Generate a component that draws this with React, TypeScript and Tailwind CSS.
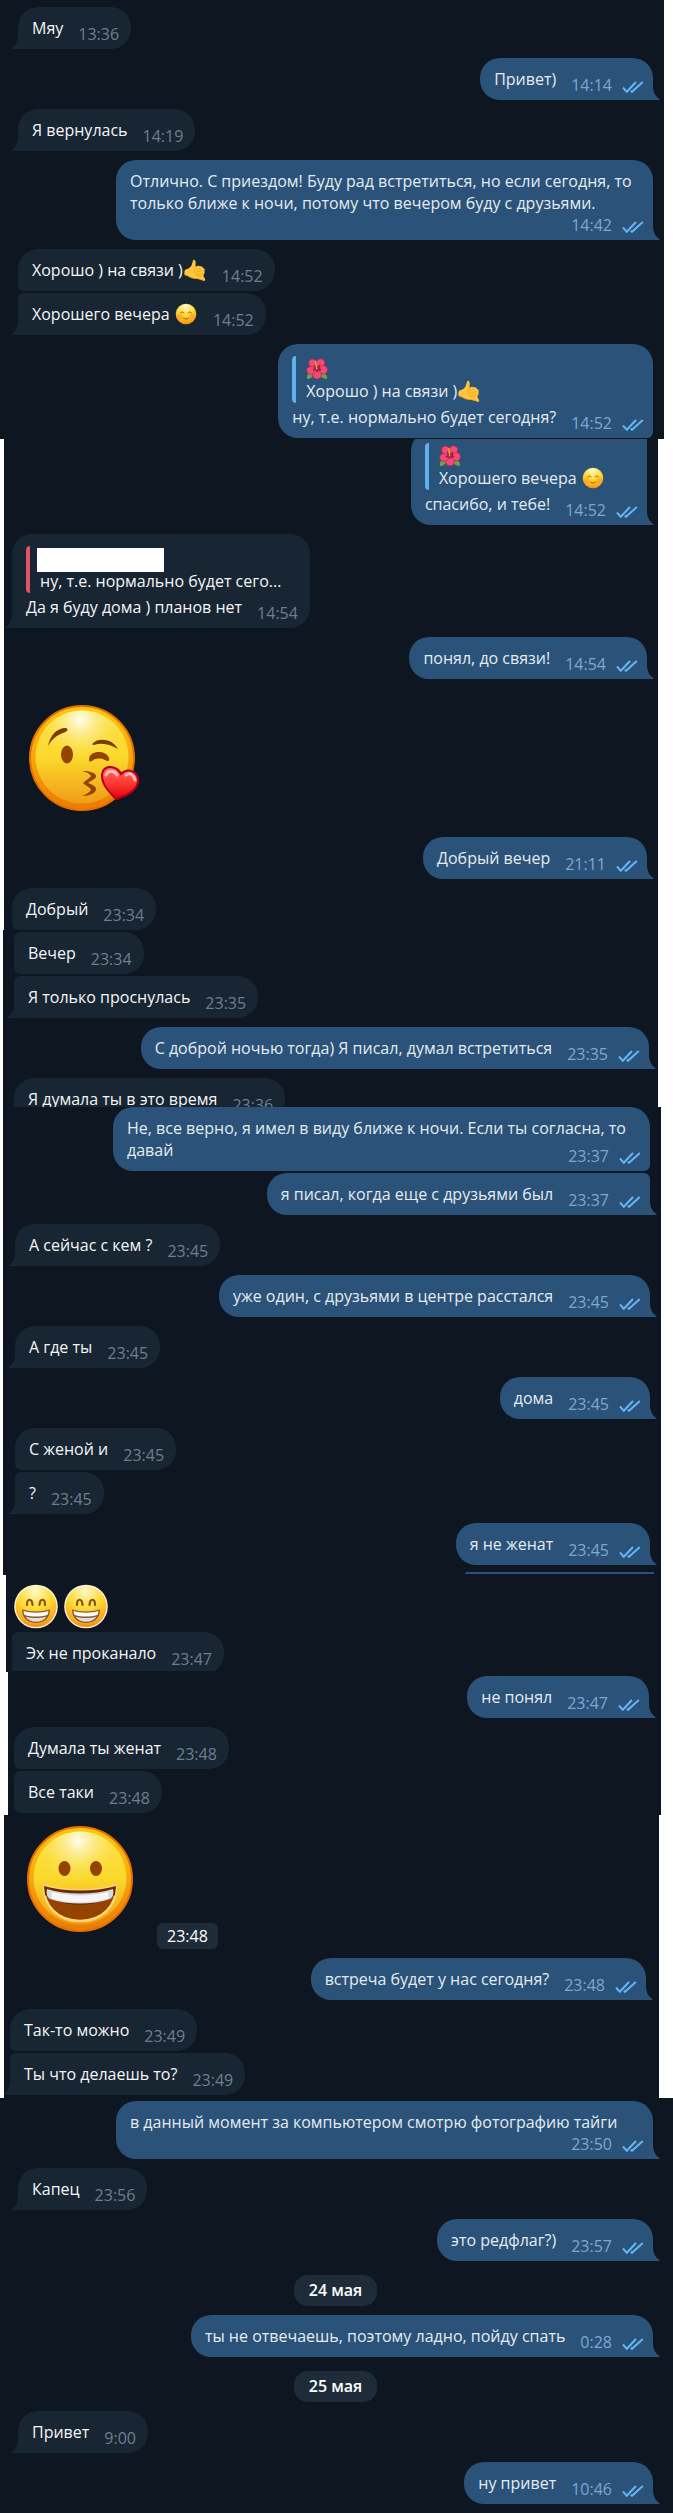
import type { ReactNode } from "react";
import clsx from "clsx";

type BubbleProps = {
  out?: boolean;
  time: string;
  children: ReactNode;
  quote?: ReactNode;
  joinTop?: boolean;
  joinBottom?: boolean;
  timeBelow?: boolean;
};

function Ticks() {
  return (
    <svg width="22" height="12" viewBox="0 0 22 12" fill="none" stroke="#64b5f6" strokeWidth="2" className="inline-block ml-2.5" aria-label="Прочитано">
      <path d="M1 6.5 L4.8 10.800 L14 1" />
      <path d="M8.800 9.600 L10 10.800 L20.800 1" />
    </svg>
  );
}

function Tail({ out }: { out?: boolean }) {
  return (
    <svg
      width="8"
      height="13"
      viewBox="0 0 8 13"
      className={clsx("absolute bottom-0", out ? "left-full -ml-px text-[#2b5278]" : "right-full -mr-px text-[#182533] -scale-x-100")}
      aria-hidden="true"
    >
      <path d="M0 0 H1 C1.2 5.5 3.5 9.5 7.6 12.2 Q8 13 7 13 H0 Z" fill="currentColor" />
    </svg>
  );
}

function Bubble({ out, time, children, quote, joinTop, joinBottom, timeBelow }: BubbleProps) {
  return (
    <div className={clsx("flex", out && "justify-end", joinTop ? "mt-0.5" : "mt-[9px]")}>
      <div
        className={clsx(
          "relative flow-root max-w-[537px] pl-3.5 pt-2.5 pb-1 rounded-[20px]",
          out ? "bg-[#2b5278] text-[#e4ecf2] pr-[9px]" : "bg-[#182533] text-[#f5f5f5] pr-3",
          joinTop && (out ? "rounded-tr-md" : "rounded-tl-md"),
          joinBottom && (out ? "rounded-br-md" : "rounded-bl-md"),
          !joinBottom && (out ? "rounded-br-none" : "rounded-bl-none")
        )}
      >
        {quote}
        {children}
        <span
          className={clsx(
            "float-right ml-[15px] whitespace-nowrap",
            !timeBelow && "mt-1.5",
            out ? "text-[#7da8d3]" : "text-[#6d7f8f]"
          )}
        >
          {time}
          {out && <Ticks />}
        </span>
        {!joinBottom && <Tail out={out} />}
      </div>
    </div>
  );
}

function Quote({ name, text, red }: { name: ReactNode; text: ReactNode; red?: boolean }) {
  return (
    <blockquote className="flex mt-0.5 mb-[3px]">
      <div className={clsx("w-1 rounded-l-sm", red ? "bg-[#e05561]" : "bg-[#5eb0ef]")} />
      <div className="pl-2.5 pt-0.5 pb-px">
        <div className="h-[22px]">{name}</div>
        <div>{text}</div>
      </div>
    </blockquote>
  );
}

function CallMe() {
  return (
    <svg viewBox="0 0 22 22" className="inline-block align-top size-[22px] mx-px" role="img" aria-label="🤙">
      <path
        d="M9.2 1 C10.8 .3 11.8 2 11.6 3.8 L11.6 8 C13.5 6.2 15 6.5 15.8 7.3 C17.5 6.8 18.8 7.5 19 9 C20.8 9.3 21 11 20.5 12.3 C21 14 20 15.5 19.2 16.6 L21 20 C21.8 21.6 20.5 22 19 21.5 L13.5 19.8 C9 20 6.2 18.5 3.8 16.8 L.5 16 C0 13.5 .6 11.5 1.5 10.6 L4 9.7 C6 8.5 7.6 7.4 8 5 Z"
        fill="#ffc63d"
      />
      <path d="M11.6 8 L10.2 12 M12.2 10.5 L15.8 9.5 M12.5 13 L18.5 11.5 M13 15.5 L19 14.3 M10.5 12 C10.5 15.5 12.5 17 16.5 17.3" fill="none" stroke="#eda620" strokeWidth=".8" strokeLinecap="round" />
      <path d="M1 15.5 C6 18.5 9 19.8 14 19.6 L20.5 21.5" fill="none" stroke="#f0a31c" strokeWidth=".8" />
    </svg>
  );
}

function Blush() {
  return (
    <svg viewBox="0 0 22 22" className="inline-block align-top size-[22px] mx-px" role="img" aria-label="☺️">
      <circle cx="11" cy="11" r="10.3" fill="url(#face)" />
      <circle cx="5" cy="13.2" r="2.8" fill="#fb8a2c" opacity=".35" />
      <circle cx="17" cy="13.2" r="2.8" fill="#fb8a2c" opacity=".35" />
      <path d="M5.500 9.8 Q7.300 7.6 9 9.8 M13 9.8 Q14.700 7.6 16.500 9.8 M8.5 15.2 Q11 17.4 13.5 15.2" fill="none" stroke="#a9651a" strokeWidth="1" strokeLinecap="round" />
    </svg>
  );
}

function Hibiscus() {
  return (
    <svg viewBox="0 0 22 22" className="block size-[22px]" role="img" aria-label="🌺">
      <path d="M1 21 Q.5 16 4 13.5 L7 17.5 Q5 21 1 21 Z M21 21 Q21.5 16.5 17.5 15 L14 18 Q17 21.4 21 21 Z" fill="#6fa344" />
      <g fill="#f04a75" stroke="#c01f4e" strokeWidth=".6">
        <ellipse cx="6.8" cy="5.4" rx="4" ry="4.5" transform="rotate(-35 6.8 5.4)" />
        <ellipse cx="14.4" cy="5" rx="4.5" ry="4.1" transform="rotate(-30 14.4 5)" />
        <ellipse cx="17.4" cy="11.8" rx="4.1" ry="4.3" />
        <ellipse cx="11" cy="16.6" rx="4.4" ry="4.3" />
        <ellipse cx="5" cy="12.4" rx="4.3" ry="4" />
      </g>
      <path d="M11 10 L8 7 M11 10 L14 7 M11 10 L15 12 M11 10 L11 14 M11 10 L7 12" stroke="#a3173f" strokeWidth="1.4" />
      <path d="M10.8 10.8 L9.6 3.6" stroke="#f5a623" strokeWidth="1.6" strokeLinecap="round" strokeDasharray="1 1.4" />
    </svg>
  );
}

// shared gradients for all the faces
function Gradients() {
  return (
    <svg width="0" height="0" className="absolute" aria-hidden="true">
      <defs>
        <radialGradient id="face" cx=".48" cy=".12" r=".95">
          <stop offset="0" stopColor="#fff9c9" />
          <stop offset=".45" stopColor="#fddb35" />
          <stop offset=".8" stopColor="#f9a91c" />
          <stop offset="1" stopColor="#ee7b08" />
        </radialGradient>
        <linearGradient id="rim" x1="0" y1="0" x2="0" y2="1">
          <stop offset="0" stopColor="#fbc90d" />
          <stop offset=".5" stopColor="#f8a50e" />
          <stop offset="1" stopColor="#ec7a00" />
        </linearGradient>
        <linearGradient id="skin" x1="0" y1="0" x2="0" y2="1">
          <stop offset="0" stopColor="#fbe04a" />
          <stop offset=".5" stopColor="#fbd92c" />
          <stop offset="1" stopColor="#f19c18" />
        </linearGradient>
        <radialGradient id="shine" cx=".48" cy=".1" r=".45">
          <stop offset="0" stopColor="#fffef0" />
          <stop offset="1" stopColor="#fbe04a" stopOpacity="0" />
        </radialGradient>
        <linearGradient id="heart" x1="0" y1="0" x2="0" y2="1">
          <stop offset="0" stopColor="#ff6b6b" />
          <stop offset=".5" stopColor="#ff3b30" />
          <stop offset="1" stopColor="#e00010" />
        </linearGradient>
      </defs>
    </svg>
  );
}

function BigFace({ children, label }: { children: ReactNode; label: string }) {
  return (
    <svg viewBox="0 0 110 106" className="block w-[110px] h-[106px]" role="img" aria-label={label}>
      <circle cx="53" cy="53" r="52" fill="url(#rim)" stroke="#e76f00" strokeWidth="2" />
      <circle cx="53" cy="52" r="46.5" fill="url(#skin)" />
      <circle cx="53" cy="52" r="46.5" fill="url(#shine)" />
      {children}
    </svg>
  );
}

function Kiss() {
  return (
    <BigFace label="😘">
      <path d="M19 41 C21 31 27 23 37 23 C40 24 38 27 35 27.5 C28 30 23 34 19 41 Z" fill="#7b3b06" />
      <path d="M64 38 C70 32 84 34 89 44 C82 40 74 37 65 40 C63 40 63 39 64 38 Z" fill="#7b3b06" />
      <ellipse cx="38" cy="49.500" rx="6" ry="9" fill="#944400" />
      <path d="M60 54 C61 45 77 45 80 53 C81 56 79 57 76 55 C71 53 67 53 63 56 C60 57 60 56 60 54 Z" fill="#944400" />
      <path d="M53 66 C61 66 67 68 67 71 C67 74 63 75 59 78 C65 80 67 82 67 84 C67 88 61 91 53 91 C58 89 61 87 62 85 C61 82 57 81 54 78 C57 75 61 73 62 71 C60 68 57 67 53 66 Z" fill="#944400" />
      <path d="M87 94 C78 85 70 76 74 66 C78 59 89 62 92 69 C99 62 110 67 109 77 C107 87 96 91 87 94 Z" fill="url(#heart)" stroke="#b4001a" strokeWidth="2" />
      <path d="M77 70 C79 65 85 65 88 70 M97 70 C101 67 105 70 106 75" fill="none" stroke="#fff" strokeOpacity=".6" strokeWidth="3" strokeLinecap="round" />
    </BigFace>
  );
}

function Grin() {
  return (
    <BigFace label="😀">
      <ellipse cx="37.500" cy="42.500" rx="6" ry="7.500" fill="#944400" />
      <ellipse cx="69" cy="42.500" rx="6" ry="7.500" fill="#944400" />
      <path d="M17 60 C38 66 68 66 89 60 C90 80 75 95 53 95 C31 95 16 80 17 60 Z" fill="#944400" stroke="#fcd676" strokeWidth="2.500" />
      <path d="M17 60 C38 66 68 66 89 60 L88 69 C68 82 38 82 18 69 Z" fill="#6b2b02" />
      <path d="M20 63 C39 69 67 69 86 63 C87 68 86 71 83 73 C66 79 40 79 23 73 C20 71 19 68 20 63 Z" fill="#d5d9dc" />
      <path d="M25 66 C42 70.500 64 70.500 81 66 C83 72 81 73 78 73.500 C62 77.500 44 77.500 28 73.500 C25 73 23 72 25 66 Z" fill="#f5f5f5" />
    </BigFace>
  );
}

function Beaming() {
  return (
    <svg viewBox="0 0 44 45" className="block w-11 h-[45px]" role="img" aria-label="😁">
      <circle cx="22" cy="22.500" r="21.800" fill="#fdf3e6" />
      <circle cx="22" cy="22.500" r="20.500" fill="url(#face)" />
      <path d="M13 21 C13 14 18 14 18.500 21 M25.500 21 C26 14 31 14 31 21" fill="none" stroke="#8a5108" strokeWidth="2.200" strokeLinecap="round" />
      <path d="M8 25.500 C17 28 27 28 36 25.500 C36 34 30 39 22 39 C14 39 8 34 8 25.500 Z" fill="#8c5a28" />
      <path d="M9.500 27 C17 29.300 27 29.300 34.500 27 C34.300 28.800 34 30 33.300 31 C26 33 18 33 10.700 31 C10 30 9.700 28.800 9.500 27 Z" fill="#fafafa" />
      <path d="M11.500 32.700 C18 34.500 26 34.500 32.500 32.700 C30 36 26.500 37.800 22 37.800 C17.500 37.800 14 36 11.500 32.700 Z" fill="#dedede" />
    </svg>
  );
}

function DatePill({ children }: { children: ReactNode }) {
  return (
    <div className="flex justify-center mt-3.5">
      <div className="px-[15px] rounded-[14px] bg-[#1e2c3a] text-white font-semibold leading-[31px]">{children}</div>
    </div>
  );
}

export default function App() {
  return (
    <main className="min-h-screen bg-white font-['Open_Sans',sans-serif] text-[16px] leading-[22px] [&>section]:overflow-hidden [&>section]:bg-[#0e1621]">
      <Gradients />

      <section className="mr-[9px] pl-[18px] pr-[11px] pb-px">
        <div className="-mt-0.5">
          <Bubble time="13:36">Мяу</Bubble>
        </div>
        <Bubble out time="14:14">Привет)</Bubble>
        <Bubble time="14:19">Я вернулась</Bubble>
        <Bubble out timeBelow time="14:42">
          Отлично. С приездом! Буду рад встретиться, но если сегодня, то только ближе к ночи, потому что вечером буду с друзьями.
        </Bubble>
        <Bubble joinBottom time="14:52">
          Хорошо ) на связи )<CallMe />
        </Bubble>
        <Bubble joinTop time="14:52">
          Хорошего вечера <Blush />
        </Bubble>
        <Bubble out joinBottom time="14:52" quote={<Quote name={<Hibiscus />} text={<>Хорошо ) на связи )<CallMe /></>} />}>
          ну, т.е. нормально будет сегодня?
        </Bubble>
      </section>

      <section className="ml-1 mr-[15px] pl-2 pr-[11px]">
        <div className="-mt-2.5">
          <Bubble out joinTop time="14:52" quote={<Quote name={<Hibiscus />} text={<>Хорошего вечера <Blush /></>} />}>
            спасибо, и тебе!
          </Bubble>
        </div>
        <Bubble
          time="14:54"
          quote={<Quote red name={<div className="w-[127px] h-6 -ml-[3px] bg-white" />} text="ну, т.е. нормально будет сего..." />}
        >
          Да я буду дома ) планов нет
        </Bubble>
        <Bubble out time="14:54">понял, до связи!</Bubble>
        <div className="mt-[9px] py-[17px] pl-[17px]">
          <Kiss />
        </div>
        <Bubble out time="21:11">Добрый вечер</Bubble>
        <Bubble joinBottom time="23:34">Добрый</Bubble>
      </section>

      <section className="ml-[3px] mr-[15px] pl-[11px] pr-[9px]">
        <Bubble joinTop joinBottom time="23:34">Вечер</Bubble>
        <Bubble joinTop time="23:35">Я только проснулась</Bubble>
        <Bubble out time="23:35">С доброй ночью тогда) Я писал, думал встретиться</Bubble>
        <div className="h-[38px] overflow-hidden">
          <Bubble joinBottom time="23:36">Я думала ты в это время</Bubble>
        </div>
      </section>

      <section className="ml-[3px] mr-3 pl-3 pr-[11px]">
        <div className="-mt-[9px]">
          <Bubble out joinBottom time="23:37">
            Не, все верно, я имел в виду ближе к ночи. Если ты согласна, то давай
          </Bubble>
        </div>
        <Bubble out joinTop time="23:37">я писал, когда еще с друзьями был</Bubble>
        <Bubble time="23:45">А сейчас с кем ?</Bubble>
        <Bubble out time="23:45">уже один, с друзьями в центре расстался</Bubble>
        <Bubble time="23:45">А где ты</Bubble>
        <Bubble out time="23:45">дома</Bubble>
        <Bubble joinBottom time="23:45">С женой и</Bubble>
        <Bubble joinTop time="23:45">?</Bubble>
        <Bubble out time="23:45">я не женат</Bubble>
        <div className="w-[189px] h-0.5 mt-[7px] mb-px -mr-1 ml-auto rounded-tl-full bg-[#2b5278]" />
      </section>

      <section className="ml-1.5 mr-3 pl-1.5 pb-px">
        <div className="flex gap-1.5 pt-[9px] mb-px pl-0.5">
          <Beaming />
          <Beaming />
        </div>
        <div className="h-[41px] overflow-hidden">
          <Bubble joinTop joinBottom time="23:47">Эх не проканало</Bubble>
        </div>
      </section>

      <section className="ml-2 mr-3 pl-1.5 pr-3 pb-0.5">
        <div className="-mt-[5px]">
          <Bubble out time="23:47">не понял</Bubble>
        </div>
        <Bubble joinBottom time="23:48">Думала ты женат</Bubble>
        <Bubble joinTop joinBottom time="23:48">Все таки</Bubble>
      </section>

      <section className="ml-1 mr-3.5 pl-1.5 pr-[13px] pb-[3px]">
        <div className="flex items-end gap-5 pt-[11px] pl-[17px]">
          <div className="pb-[17px]">
            <Grin />
          </div>
          <span className="px-2.5 rounded-md bg-[#1e2c3a] text-white leading-[26px]">23:48</span>
        </div>
        <Bubble out time="23:48">встреча будет у нас сегодня?</Bubble>
        <Bubble joinBottom time="23:49">Так-то можно</Bubble>
        <Bubble joinTop time="23:49">Ты что делаешь то?</Bubble>
      </section>

      <section className="pl-[18px] pr-5 pb-[9px]">
        <div className="-mt-1.5">
          <Bubble out timeBelow time="23:50">в данный момент за компьютером смотрю фотографию тайги</Bubble>
        </div>
        <Bubble time="23:56">Капец</Bubble>
        <Bubble out time="23:57">это редфлаг?)</Bubble>
        <DatePill>24 мая</DatePill>
        <Bubble out time="0:28">ты не отвечаешь, поэтому ладно, пойду спать</Bubble>
        <DatePill>25 мая</DatePill>
        <Bubble time="9:00">Привет</Bubble>
        <Bubble out time="10:46">ну привет</Bubble>
      </section>
    </main>
  );
}
